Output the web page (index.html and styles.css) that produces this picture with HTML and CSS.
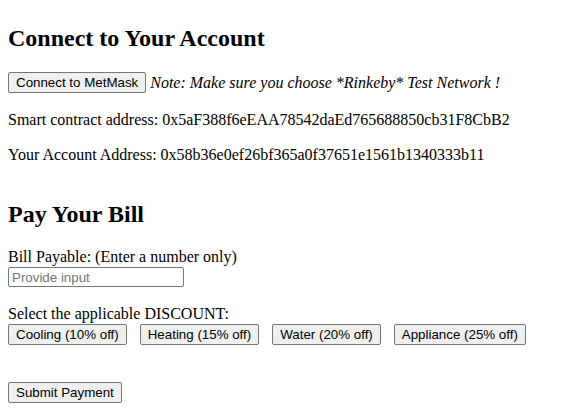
FILE: index.html
```html
<!DOCTYPE html>
<html>
<head>
<meta charset="utf-8">
<link rel="stylesheet" href="styles.css">
</head>
<body>
<h2 class="title">Connect to Your Account</h2>
<div class="connect">
<button class="btn">Connect to MetMask</button>
<i class="note">Note: Make sure you choose *Rinkeby* Test Network !</i>
</div>
<p class="line">Smart contract address: 0x5aF388f6eEAA78542daEd765688850cb31F8CbB2</p>
<p class="line">Your Account Address: 0x58b36e0ef26bf365a0f37651e1561b1340333b11</p>
<h2 class="title pay-title">Pay Your Bill</h2>
<div class="field">
<label class="label" for="bill">Bill Payable: (Enter a number only)</label>
<input class="input" id="bill" type="text" placeholder="Provide input">
</div>
<div class="discount">
<div class="label">Select the applicable DISCOUNT:</div>
<div class="options">
<button class="btn">Cooling (10% off)</button>
<button class="btn">Heating (15% off)</button>
<button class="btn">Water (20% off)</button>
<button class="btn">Appliance (25% off)</button>
</div>
</div>
<div class="submit">
<button class="btn">Submit Payment</button>
</div>
</body>
</html>
```
FILE: styles.css
```css
body {
  margin: 8px;
  font-family: "Liberation Serif", "Times New Roman", serif;
  font-size: 16px;
  color: #000;
  background: #fff;
}
.title {
  font-size: 24px;
  line-height: 28px;
  font-weight: bold;
  margin: 16px 0 20px;
}
.pay-title {
  margin-top: 36px;
}
.btn {
  box-sizing: border-box;
  height: 21px;
  font-family: "Liberation Sans", Arial, sans-serif;
  font-size: 13.333px;
  line-height: 15px;
  color: #000;
  background: #efefef;
  border: 1px solid #767676;
  border-radius: 2px;
  padding: 2px 7px;
}
.connect {
  display: flex;
  align-items: center;
  gap: 4px;
  margin-bottom: 17px;
}
.note {
  line-height: 19px;
}
.line {
  line-height: 19px;
  margin: 0 0 16px;
}
.field {
  display: flex;
  flex-direction: column;
  align-items: flex-start;
}
.label {
  display: block;
  line-height: 18px;
}
.input {
  box-sizing: border-box;
  width: 176px;
  height: 20px;
  margin: 1px 0 0;
  font-family: "Liberation Sans", Arial, sans-serif;
  font-size: 13.333px;
  border: 1px solid #767676;
  border-radius: 2px;
  padding: 1px 3px;
}
.input::placeholder {
  color: #757575;
}
.discount {
  margin-top: 18px;
}
.options {
  display: flex;
  gap: 13px;
  margin-top: 1px;
}
.submit {
  margin-top: 37px;
}
```
